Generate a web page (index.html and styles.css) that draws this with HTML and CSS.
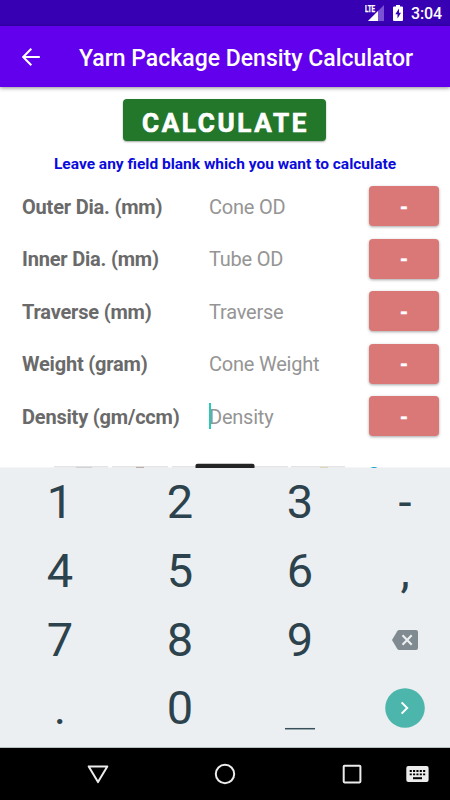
FILE: index.html
```
<!DOCTYPE html>
<html lang="en">
<head>
<meta charset="utf-8">
<title>Yarn Package Density Calculator</title>
<link rel="stylesheet" href="styles.css">
</head>
<body>
<div class="screen">
  <div class="status">
    <svg class="signal" width="21" height="18" viewBox="0 0 21 18">
      <path d="M19 0V16H3Z" fill="#7a52d3"/>
      <path d="M13 6V16H3Z" fill="#fff"/>
      <text class="lte" x="0" y="7.2" textLength="10" lengthAdjust="spacingAndGlyphs">LTE</text>
    </svg>
    <svg class="battery" width="10" height="16" viewBox="0 0 10 16">
      <path d="M1 1.6H3V0H7V1.6H9Q10 1.6 10 2.6V15Q10 16 9 16H1Q0 16 0 15V2.6Q0 1.6 1 1.6Z" fill="#fff"/>
      <path d="M6 3.5L2.3 9.3H4.5V13.5L8 7.8H6Z" fill="#3700b3"/>
    </svg>
    <span class="time">3:04</span>
  </div>
  <header class="appbar">
    <svg class="back" width="18" height="18" viewBox="0 0 18 18" fill="none" stroke="#fff" stroke-width="2"><path d="M17.8 9H2M9.3 .8L1.2 9L9.3 17.2"/></svg>
    <h1 class="title">Yarn Package Density Calculator</h1>
  </header>
  <main class="content">
    <button class="calculate">CALCULATE</button>
    <p class="hint">Leave any field blank which you want to calculate</p>
    <div class="fields">
      <div class="row"><span class="label">Outer Dia. (mm)</span><span class="input">Cone OD</span><button class="clear">-</button></div>
      <div class="row"><span class="label">Inner Dia. (mm)</span><span class="input">Tube OD</span><button class="clear">-</button></div>
      <div class="row"><span class="label">Traverse (mm)</span><span class="input">Traverse</span><button class="clear">-</button></div>
      <div class="row"><span class="label">Weight (gram)</span><span class="input">Cone Weight</span><button class="clear">-</button></div>
      <div class="row"><span class="label">Density (gm/ccm)</span><span class="input focused">Density</span><button class="clear">-</button></div>
    </div>
    <svg class="banner" width="450" height="6" viewBox="0 0 450 6">
      <path d="M0 5H450V6H0Z" fill="#f4f5f6"/>
      <path d="M54 4.8H108M112 4.8H168M172 4.8H288M291 4.8H345" stroke="#d9d9d9"/>
      <path d="M76 5.4H92" stroke="#d0cfcf"/><path d="M136 5.4H144" stroke="#b8a7a5"/><path d="M320 5.4H328" stroke="#ddd4b5"/>
      <path d="M195.5 6V3.4Q195.5 1.8 197.5 1.8H252.5Q254.5 1.8 254.5 3.4V6Z" fill="#242424"/>
      <path d="M370.5 6Q374 3.8 377.5 6Z" fill="#0b9fc6"/>
    </svg>
  </main>
  <section class="keyboard">
    <span class="key">1</span><span class="key">2</span><span class="key">3</span><span class="key">-</span>
    <span class="key">4</span><span class="key">5</span><span class="key">6</span><span class="key">,</span>
    <span class="key">7</span><span class="key">8</span><span class="key">9</span>
    <span class="key"><svg width="26" height="20" viewBox="0 0 26 20"><path d="M7.3 0H24Q26 0 26 2V18Q26 20 24 20H7.3Q6 20 5.2 18.7L0 10L5.2 1.3Q6 0 7.3 0Z" fill="#7f8b90"/><path d="M10.5 5.3L19.7 14.7M19.7 5.3L10.5 14.7" stroke="#eceff1" stroke-width="2.2"/></svg></span>
    <span class="key">.</span><span class="key">0</span>
    <span class="key"><svg width="30" height="44" viewBox="0 0 30 44"><path d="M0 42.7H30" stroke="#37505a" stroke-width="1.5"/></svg></span>
    <span class="key"><svg width="40" height="40" viewBox="0 0 40 40"><circle cx="20" cy="20" r="19.8" fill="#4cb6ac"/><path d="M16.6 14.4L22.2 20L16.6 25.6" fill="none" stroke="#fff" stroke-width="2"/></svg></span>
  </section>
  <nav class="navbar">
    <span class="nav-item back-item"><svg width="22" height="19" viewBox="0 0 22 19"><path d="M1.7 1.4H20.3L11 17.1Z" fill="none" stroke="#ececec" stroke-width="2" stroke-linejoin="round"/></svg></span>
    <span class="nav-item home-item"><svg width="22" height="22" viewBox="0 0 22 22"><circle cx="11" cy="11" r="9.2" fill="none" stroke="#ececec" stroke-width="2"/></svg></span>
    <span class="nav-item recent-item"><svg width="20" height="20" viewBox="0 0 20 20"><rect x="1.7" y="1.7" width="16.7" height="16.7" rx=".8" fill="none" stroke="#ececec" stroke-width="2"/></svg></span>
    <span class="nav-item ime-item"><svg width="23" height="16" viewBox="0 0 23 16"><rect x=".3" width="22.3" height="16" rx="2" fill="#ececec"/><path d="M3.7 5H19.3M3.7 8.3H19.3" stroke="#000" stroke-width="1.8" stroke-dasharray="2.1 1.25"/><path d="M7 12.2H16" stroke="#000" stroke-width="2"/></svg></span>
  </nav>
</div>
</body>
</html>
```
FILE: styles.css
```
* { box-sizing: border-box; }
body { margin: 0; font-family: Roboto, sans-serif; }
.screen { width: 450px; height: 800px; display: flex; flex-direction: column; overflow: hidden; background: #fff; }
.status { height: 26px; flex: none; background: #3700b3; display: flex; align-items: flex-start; padding: 5px 8px 0 0; justify-content: flex-end; color: #fff; }
.lte { font: bold 9px "Roboto", sans-serif; fill: #fff; stroke: #fff; stroke-width: .35px; }
.signal { margin-right: 7px; }
.battery { margin: 0 8px 0 0; }
.time { font-size: 16px; font-weight: 500; line-height: 18px; width: 31px; letter-spacing: -.1px; white-space: nowrap; }
.appbar { height: 61px; flex: none; background: #6200ee; display: flex; align-items: center; padding-left: 22px; box-shadow: 0 1px 4px rgba(0,0,0,.45); z-index: 1; }
.back { margin-right: 39px; }
.title { margin: 0; padding-top: 4px; color: #fff; font-size: 23px; font-weight: 500; line-height: 30px; white-space: nowrap; }
.content { height: 381px; flex: none; display: flex; flex-direction: column; align-items: center; padding-top: 12px; }
button { font-family: inherit; border: 0; padding: 0; color: #fff; }
.calculate { width: 203px; height: 42px; flex: none; border-radius: 4px; background: #23772b; font-size: 26px; font-weight: 700; letter-spacing: 2.7px; padding: 5px 0 0 2px; box-shadow: 0 1px 2px rgba(0,0,0,.35); margin-right: 1px; -webkit-text-stroke: .7px #fff; }
.hint { margin: 13px 0 0; font-size: 15.5px; line-height: 20px; font-weight: 700; color: #0b0bdc; letter-spacing: 0; white-space: nowrap; }
.fields { width: 450px; padding: 6px 11px 0 22px; display: flex; flex-direction: column; }
.row { height: 52.5px; display: grid; grid-template-columns: 187px 160px 70px; align-items: center; white-space: nowrap; }
.label { padding-top: 1px; font-size: 20px; font-weight: 700; letter-spacing: -.2px; color: #6a6a6a; }
.input { padding-top: 1px; font-size: 20px; letter-spacing: -.22px; color: #959595; }
.focused { position: relative; }
.focused::before { content: ""; position: absolute; left: 0; top: -1px; width: 2px; height: 26px; background: #26cbb8; }
.clear { height: 40px; border-radius: 4px; background: #da7777; font-size: 20px; font-weight: 700; padding-top: 1px; box-shadow: 0 1px 3px rgba(0,0,0,.35); -webkit-text-stroke: .5px #fff; }
.banner { margin-top: auto; flex: none; }
.keyboard { height: 280px; flex: none; background: #eceff1; display: grid; grid-template-columns: 120px 120px 120px 90px; grid-template-rows: repeat(4, 68.7px); border-bottom: 1px solid #b8bfc2; }
.key { display: flex; align-items: center; justify-content: center; font-size: 47px; line-height: 70px; color: #2c434d; }
.navbar { height: 52px; flex: none; background: #000; display: flex; align-items: center; padding-left: 53px; }
.nav-item { display: flex; justify-content: center; align-items: center; }
.back-item { width: 90px; }
.home-item { width: 164px; }
.recent-item { width: 90px; }
.ime-item { width: 40px; }
```
